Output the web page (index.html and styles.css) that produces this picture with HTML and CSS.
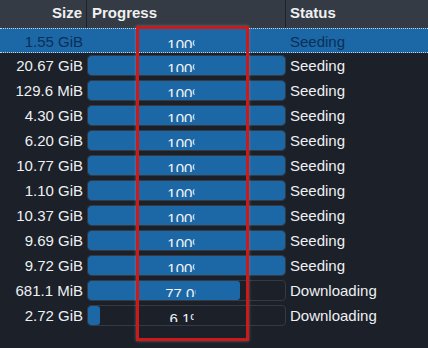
FILE: index.html
```html
<html>
<head>
  <meta charset="utf-8">
  <title>Transfers</title>
  <link rel="stylesheet" href="styles.css">
</head>
<body>
  <div class="list">
    <div class="row head">
      <div class="cell size">Size</div>
      <div class="cell progress-head">Progress</div>
      <div class="cell status">Status</div>
    </div>

    <div class="row selected">
      <div class="cell size">1.55 GiB</div>
      <div class="cell progress"><div class="track"><div class="fill" style="width: 100%"></div><span class="label">100%</span></div></div>
      <div class="cell status">Seeding</div>
    </div>
    <div class="row">
      <div class="cell size">20.67 GiB</div>
      <div class="cell progress"><div class="track"><div class="fill" style="width: 100%"></div><span class="label">100%</span></div></div>
      <div class="cell status">Seeding</div>
    </div>
    <div class="row">
      <div class="cell size">129.6 MiB</div>
      <div class="cell progress"><div class="track"><div class="fill" style="width: 100%"></div><span class="label">100%</span></div></div>
      <div class="cell status">Seeding</div>
    </div>
    <div class="row">
      <div class="cell size">4.30 GiB</div>
      <div class="cell progress"><div class="track"><div class="fill" style="width: 100%"></div><span class="label">100%</span></div></div>
      <div class="cell status">Seeding</div>
    </div>
    <div class="row">
      <div class="cell size">6.20 GiB</div>
      <div class="cell progress"><div class="track"><div class="fill" style="width: 100%"></div><span class="label">100%</span></div></div>
      <div class="cell status">Seeding</div>
    </div>
    <div class="row">
      <div class="cell size">10.77 GiB</div>
      <div class="cell progress"><div class="track"><div class="fill" style="width: 100%"></div><span class="label">100%</span></div></div>
      <div class="cell status">Seeding</div>
    </div>
    <div class="row">
      <div class="cell size">1.10 GiB</div>
      <div class="cell progress"><div class="track"><div class="fill" style="width: 100%"></div><span class="label">100%</span></div></div>
      <div class="cell status">Seeding</div>
    </div>
    <div class="row">
      <div class="cell size">10.37 GiB</div>
      <div class="cell progress"><div class="track"><div class="fill" style="width: 100%"></div><span class="label">100%</span></div></div>
      <div class="cell status">Seeding</div>
    </div>
    <div class="row">
      <div class="cell size">9.69 GiB</div>
      <div class="cell progress"><div class="track"><div class="fill" style="width: 100%"></div><span class="label">100%</span></div></div>
      <div class="cell status">Seeding</div>
    </div>
    <div class="row">
      <div class="cell size">9.72 GiB</div>
      <div class="cell progress"><div class="track"><div class="fill" style="width: 100%"></div><span class="label">100%</span></div></div>
      <div class="cell status">Seeding</div>
    </div>
    <div class="row">
      <div class="cell size">681.1 MiB</div>
      <div class="cell progress"><div class="track"><div class="fill" style="width: 77%"></div><span class="label">77.0%</span></div></div>
      <div class="cell status">Downloading</div>
    </div>
    <div class="row">
      <div class="cell size">2.72 GiB</div>
      <div class="cell progress"><div class="track"><div class="fill" style="width: 6.1%"></div><span class="label">6.1%</span></div></div>
      <div class="cell status">Downloading</div>
    </div>

    <!-- annotation box drawn over the progress column -->
    <div class="highlight"></div>
  </div>
</body>
</html>
```

FILE: styles.css
```css
body {
  margin: 0;
  background: #1b2029;
  color: #eef0f2;
  font-family: "Liberation Sans", Arial, sans-serif;
  font-size: 15px;
}
.list {
  position: relative;
  width: 428px;
  height: 348px;
  overflow: hidden;
}
.row {
  display: grid;
  grid-template-columns: 87px 199px 1fr;
  height: 25px;
  align-items: center;
}
.head {
  height: 28px;
  background: #353b44;
  font-weight: bold;
}
.head .cell {
  height: 28px;
  line-height: 26px;
}
.head .size {
  border-right: 1px solid #1e232b;
}
.head .progress-head {
  padding-left: 5px;
  border-right: 1px solid #1e232b;
}
.cell {
  white-space: nowrap;
}
.size {
  text-align: right;
  padding-right: 4px;
}
.status {
  padding-left: 4px;
}
.selected {
  background: #1c67a6;
  color: #0a2f58;
  border-top: 1px dotted #c8d3df;
  border-bottom: 1px dotted #c8d3df;
  height: 23px;
}
.progress {
  height: 25px;
  padding: 2px 0;
  box-sizing: border-box;
}
.track {
  position: relative;
  height: 21px;
  border: 1px solid #333a44;
  border-radius: 4px;
  box-sizing: border-box;
  overflow: hidden;
  text-align: center;
}
.selected .track {
  border-color: transparent;
}
.fill {
  height: 100%;
  background: #1c67a6;
  border-radius: 3px;
}
.label {
  position: absolute;
  left: 0;
  right: 0;
  top: 5px;
  margin: 0 auto;
  width: max-content;
  color: #f2f4f6;
  font-size: 15px;
  line-height: 16px;
  clip-path: inset(0 29% 5px 0);
}
.highlight {
  position: absolute;
  left: 136px;
  top: 26px;
  width: 113px;
  height: 315px;
  border: 3px solid #cc1a1a;
  box-sizing: border-box;
  box-shadow: 0 0 3px rgba(150, 150, 150, 0.6);
}
```
